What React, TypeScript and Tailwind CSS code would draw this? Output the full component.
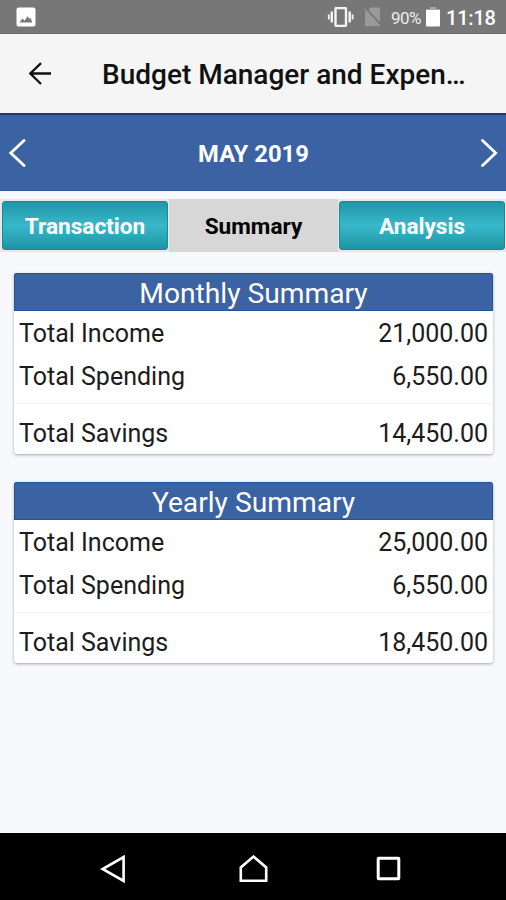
import { clsx } from 'clsx'

const tabs = [
    { label: 'Transaction', active: false },
    { label: 'Summary', active: true },
    { label: 'Analysis', active: false },
]

const summaries = [
    { title: 'Monthly Summary', income: '21,000.00', spending: '6,550.00', savings: '14,450.00' },
    { title: 'Yearly Summary', income: '25,000.00', spending: '6,550.00', savings: '18,450.00' },
]

function StatusBar() {
    return (
        <div className="flex h-[34px] items-center border-b border-[#686868] bg-[#777777] pl-4 pr-[10px] pt-px text-white">
            <svg className="h-5 w-5" viewBox="0 0 20 20">
                <rect x="0.5" y="0.5" width="19" height="19" rx="2" fill="#fff" />
                <path d="M3.5 15.5l3-4 2 2.2 3-4.4 2 2.4 1-1 1.8 4.8z" fill="#777" />
            </svg>
            <div className="ml-auto flex items-center">
                <svg className="h-5 w-[27px]" viewBox="0 0 27 20" fill="none" stroke="#f4f4f4">
                    <rect x="8.5" y="1" width="10.5" height="18" rx="1" strokeWidth="2.4" />
                    <path d="M4.8 4.5v11M22.7 4.5v11" strokeWidth="2.4" />
                    <path d="M1.8 7.5v5M25.6 7.5v5" strokeWidth="1.8" />
                </svg>
                <svg className="ml-2.5 h-5 w-[18px]" viewBox="0 0 18 20">
                    <path d="M6.5 0.5H15a1 1 0 0 1 1 1V19H1V6z" fill="#9a9a9a" />
                    <path d="M1.2 1.2L17 18.8" stroke="#777" strokeWidth="3" />
                    <path d="M0.5 2.2L16 19.4" stroke="#a0a0a0" strokeWidth="1.3" />
                </svg>
                <span className="ml-[9px] w-[31px] whitespace-nowrap pt-px text-[17px] leading-5 tracking-[-0.5px] text-[#ececec]">90%</span>
                <svg className="ml-1 h-5 w-[14px]" viewBox="0 0 14 20">
                    <path d="M4 0h6v2h4v3H0V2h4z" fill="#a8a8a8" />
                    <path d="M0 3h14v15.5a1 1 0 0 1-1 1H1a1 1 0 0 1-1-1z" fill="#fff" />
                </svg>
                <span className="ml-[6px] w-[50px] whitespace-nowrap pt-px text-[20px] font-medium leading-5 tracking-[-0.2px]">11:18</span>
            </div>
        </div>
    )
}

function AppHeader() {
    return (
        <header className="flex h-[79px] items-center bg-[#f5f5f5] pl-7">
            <svg className="h-6 w-6" viewBox="0 0 24 24" fill="none" stroke="#111" strokeWidth="2.3">
                <path d="M23 11.5H2.5M13 1.2L2.3 11.5 13 22" />
            </svg>
            <h1 className="ml-[50px] whitespace-nowrap pt-0.5 text-[28px] font-medium leading-8 text-[#111]">
                Budget Manager and Expen…
            </h1>
        </header>
    )
}

function MonthPicker() {
    return (
        <div className="flex h-[78px] items-center justify-between border-t-2 border-b border-t-[#153c7c] border-b-[#2f5595] bg-[#3b62a2] px-2 text-white">
            <svg className="h-7 w-[18px]" viewBox="0 0 18 28" fill="none" stroke="#fff" strokeWidth="2.8" strokeLinecap="round">
                <path d="M16 1.5L2.8 14 16 26.5" />
            </svg>
            <span className="pl-px pt-[3px] text-[23.8px] font-bold leading-8">MAY 2019</span>
            <svg className="h-7 w-[18px]" viewBox="0 0 18 28" fill="none" stroke="#fff" strokeWidth="2.8" strokeLinecap="round">
                <path d="M2.5 1.5L15.7 14 2.5 26.5" />
            </svg>
        </div>
    )
}

function Tabs() {
    return (
        <div className="mt-2 grid h-[53px] grid-cols-[169px_169px_168px] bg-[#e6e8ea]">
            {tabs.map(tab => (
                <button
                    key={tab.label}
                    className={clsx(
                        'text-[22.6px] font-bold leading-7',
                        tab.active
                            ? 'bg-[#d7d7d7] pt-[3px] text-black'
                            : 'mx-px mt-[2px] mb-[2px] rounded-[3px] border border-[#158a9c] bg-linear-to-b from-[#1f97a8] via-[#38b8ca] to-[#1b95a6] pt-[3px] text-white first:ml-[2px]',
                    )}
                >
                    {tab.label}
                </button>
            ))}
        </div>
    )
}

function Row({ label, value }: { label: string; value: string }) {
    return (
        <div className="flex h-[43px] items-center justify-between pl-[5px] pr-[5px] text-[25px] leading-8 text-[#1c1c1c]">
            <span>{label}</span>
            <span>{value}</span>
        </div>
    )
}

function SummaryCard({ title, income, spending, savings }: (typeof summaries)[number]) {
    return (
        <section className="h-[181px] overflow-hidden rounded-[3px] bg-white shadow-[0_1px_3px_rgba(0,0,0,0.35)]">
            <h2 className="h-[38px] border border-[#27539a] bg-[#3b62a2] pt-px text-center text-[28.2px] leading-[38px] text-white">
                {title}
            </h2>
            <div className="pt-px">
                <Row label="Total Income" value={income} />
                <Row label="Total Spending" value={spending} />
            </div>
            <div className="mt-[5px] border-t border-[#f3f4f6] pt-2">
                <Row label="Total Savings" value={savings} />
            </div>
        </section>
    )
}

function NavBar() {
    return (
        <nav className="flex h-[67px] items-center bg-black pl-[100px] pt-1">
            <svg className="h-7 w-[26px]" viewBox="0 0 26 28" fill="none" stroke="#fff" strokeWidth="2.6">
                <path d="M23.6 2v24L2.6 14z" />
            </svg>
            <svg className="ml-[113px] h-7 w-[29px]" viewBox="0 0 29 28" fill="none" stroke="#fff" strokeWidth="2.6">
                <path d="M1.8 25.7V12.4L14.5 1.6l12.7 10.8v13.3z" />
            </svg>
            <svg className="ml-[108px] h-[25px] w-[25px]" viewBox="0 0 25 25" fill="none" stroke="#fff" strokeWidth="3">
                <rect x="2.2" y="2.2" width="20.6" height="20.6" rx="0.5" />
            </svg>
        </nav>
    )
}

export default function App() {
    return (
        <div className="flex h-[900px] w-[506px] flex-col overflow-hidden bg-[#f7f9fd] font-['Roboto',sans-serif]">
            <StatusBar />
            <AppHeader />
            <MonthPicker />
            <Tabs />
            <main className="flex flex-1 flex-col gap-7 pl-[14px] pr-[13px] pt-[21px]">
                {summaries.map(summary => (
                    <SummaryCard key={summary.title} {...summary} />
                ))}
            </main>
            <NavBar />
        </div>
    )
}
